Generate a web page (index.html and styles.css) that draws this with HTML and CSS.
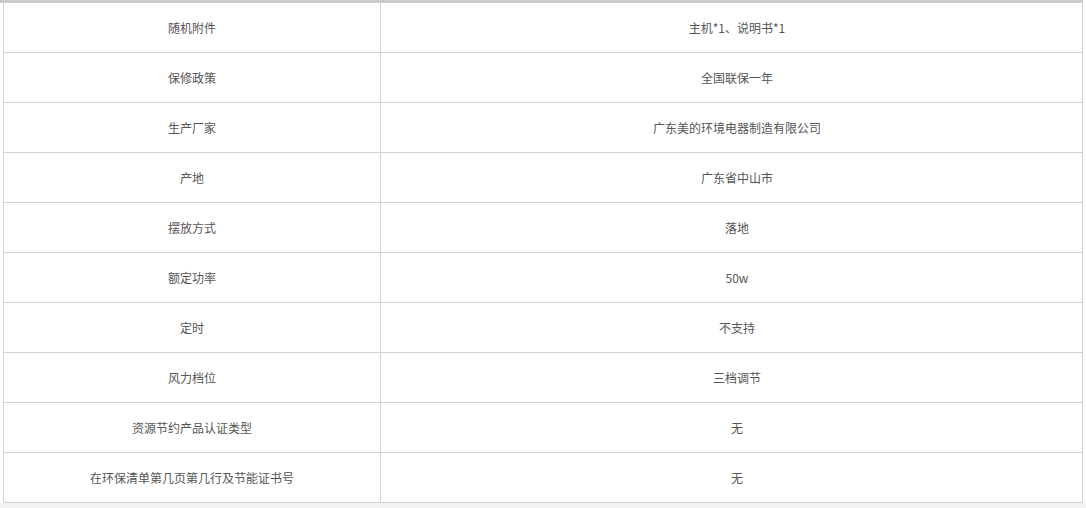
FILE: index.html
```html
<!DOCTYPE html>
<html lang="zh">
<head>
<meta charset="utf-8">
<link rel="stylesheet" href="styles.css">
</head>
<body>
<div class="page">
  <table class="spec">
    <tr><td class="k">随机附件</td><td class="v">主机*1、说明书*1</td></tr>
    <tr><td class="k">保修政策</td><td class="v">全国联保一年</td></tr>
    <tr><td class="k">生产厂家</td><td class="v">广东美的环境电器制造有限公司</td></tr>
    <tr><td class="k">产地</td><td class="v">广东省中山市</td></tr>
    <tr><td class="k">摆放方式</td><td class="v">落地</td></tr>
    <tr><td class="k">额定功率</td><td class="v">50w</td></tr>
    <tr><td class="k">定时</td><td class="v">不支持</td></tr>
    <tr><td class="k">风力档位</td><td class="v">三档调节</td></tr>
    <tr><td class="k">资源节约产品认证类型</td><td class="v">无</td></tr>
    <tr><td class="k">在环保清单第几页第几行及节能证书号</td><td class="v">无</td></tr>
  </table>
</div>
<div class="foot"></div>
</body>
</html>
```

FILE: styles.css
```css
html, body {
  margin: 0;
  padding: 0;
  background: #ffffff;
}
body {
  font-family: "Noto Sans CJK SC", "Noto Sans", sans-serif;
  font-size: 12px;
  color: #555555;
}
.page {
  width: 1083px;
  border-top: 3px solid #cccccc;
}
.spec {
  margin-left: 3px;
  width: 1080px;
  border-collapse: collapse;
  table-layout: fixed;
}
.spec td {
  height: 49px;
  padding: 0;
  border: 1px solid #d2d2d2;
  text-align: center;
  vertical-align: middle;
  line-height: 16px;
}
.spec td.k {
  width: 376px;
}
.spec td.v {
  padding-left: 11px;
}
.spec tr:first-child td {
  border-top: none;
  height: 49px;
}
.foot {
  height: 6px;
  background: #f2f2f2;
}
```
